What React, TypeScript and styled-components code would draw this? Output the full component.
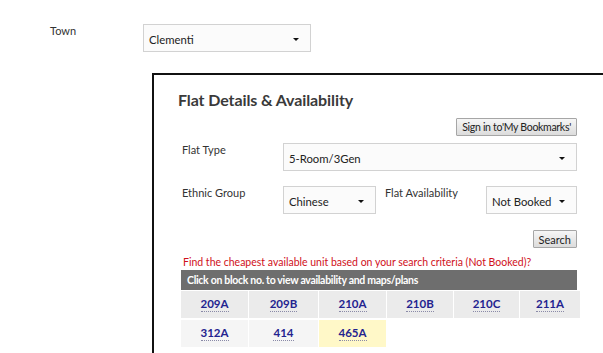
import React from "react";
import styled, { createGlobalStyle } from "styled-components";

const GlobalStyle = createGlobalStyle`
  html, body {
    margin: 0;
    padding: 0;
    background: #fff;
    overflow: hidden;
  }
  body {
    font-family: Lato, "Liberation Sans", sans-serif;
    color: #333;
  }
`;

const Page = styled.div`
  width: 603px;
  height: 353px;
  overflow: hidden;
`;

const TownRow = styled.div`
  display: flex;
  align-items: flex-start;
  padding: 24px 0 0 50px;
`;

const TownLabel = styled.div`
  width: 93px;
  font-size: 11px;
  line-height: 14px;
`;

const SelectBox = styled.div<{ $w: number }>`
  box-sizing: border-box;
  width: ${(p) => p.$w}px;
  height: 28px;
  border: 1px solid #d2d2d2;
  background: #fbfbfb;
  display: flex;
  align-items: center;
  justify-content: space-between;
  padding: 3px 11px 0 5px;
  font-size: 11.3px;
  color: #222;
`;

const Caret = styled.span`
  width: 0;
  height: 0;
  border-left: 3px solid transparent;
  border-right: 3px solid transparent;
  border-top: 3px solid #111;
`;

const Panel = styled.div`
  margin: 21px 0 0 152px;
  border-top: 2px solid #111;
  border-left: 2px solid #111;
  padding: 15px 0 0 27px;
  height: 300px;
`;

const Content = styled.div`
  width: 396px;
`;

const Title = styled.h2`
  margin: 0 0 0 -3px;
  font-size: 16px;
  line-height: 20px;
  font-weight: 700;
  color: #3a3a3a;
  letter-spacing: -0.1px;
`;

const RightRow = styled.div<{ $mt: number }>`
  display: flex;
  justify-content: flex-end;
  margin-top: ${(p) => p.$mt}px;
`;

const Button = styled.button<{ $tight?: boolean }>`
  box-sizing: border-box;
  height: 18px;
  padding: 0 5px;
  border: 1px solid #a6a6a6;
  border-radius: 1px;
  background: linear-gradient(#f6f6f6, #dcdcdc);
  font-family: Lato, "Liberation Sans", sans-serif;
  font-size: ${(p) => (p.$tight ? "10.5px" : "11px")};
  letter-spacing: ${(p) => (p.$tight ? "-0.3px" : "0")};
  color: #222;
`;

const FieldRow = styled.div<{ $mt: number }>`
  display: flex;
  align-items: flex-start;
  margin-top: ${(p) => p.$mt}px;
`;

const Label = styled.div<{ $w: number; $pl?: number }>`
  box-sizing: border-box;
  width: ${(p) => p.$w}px;
  padding-left: ${(p) => p.$pl ?? 1}px;
  font-size: 11px;
  line-height: 14px;
  color: #333;
`;

const Notice = styled.div`
  margin-top: 7px;
  font-size: 10.5px;
  line-height: 14px;
  color: #d0101a;
  padding-left: 2px;
`;

const TableHead = styled.div`
  margin-top: 1px;
  height: 20px;
  background: #6e6e6e;
  color: #fff;
  font-size: 10.5px;
  font-weight: 700;
  letter-spacing: -0.3px;
  line-height: 20px;
  padding-left: 6px;
`;

const Blocks = styled.div`
  display: grid;
  grid-template-columns: 67px 69px 67px 66px 65px 60px;
  grid-auto-rows: 27px;
  column-gap: 1px;
  row-gap: 2px;
  margin-top: 1px;
`;

const Cell = styled.div<{ $bg: string }>`
  background: ${(p) => p.$bg};
  display: flex;
  align-items: center;
  justify-content: center;
`;

const BlockLink = styled.a`
  font-size: 11.5px;
  font-weight: 700;
  color: #23238f;
  text-decoration: none;
  border-bottom: 1px dotted #8a8aa8;
  line-height: 13px;
  padding-bottom: 1px;
`;

const blocks = [
  { no: "209A", bg: "#ebebeb" },
  { no: "209B", bg: "#ebebeb" },
  { no: "210A", bg: "#ebebeb" },
  { no: "210B", bg: "#ebebeb" },
  { no: "210C", bg: "#ebebeb" },
  { no: "211A", bg: "#ebebeb" },
  { no: "312A", bg: "#f5f5f5" },
  { no: "414", bg: "#f5f5f5" },
  { no: "465A", bg: "#fff8c8" },
];

const Select = ({ value, w }: { value: string; w: number }) => (
  <SelectBox $w={w}>
    <span>{value}</span>
    <Caret />
  </SelectBox>
);

export default function App() {
  return (
    <Page>
      <GlobalStyle />
      <TownRow>
        <TownLabel>Town</TownLabel>
        <Select value="Clementi" w={168} />
      </TownRow>
      <Panel>
        <Content>
          <Title>Flat Details &amp; Availability</Title>
          <RightRow $mt={8}>
            <Button $tight>Sign in to'My Bookmarks'</Button>
          </RightRow>
          <FieldRow $mt={7}>
            <Label $w={102}>Flat Type</Label>
            <Select value="5-Room/3Gen" w={294} />
          </FieldRow>
          <FieldRow $mt={15}>
            <Label $w={102}>Ethnic Group</Label>
            <Select value="Chinese" w={93} />
            <Label $w={110} $pl={9}>Flat Availability</Label>
            <Select value="Not Booked" w={91} />
          </FieldRow>
          <RightRow $mt={16}>
            <Button>Search</Button>
          </RightRow>
          <Notice>
            Find the cheapest available unit based on your search criteria (Not Booked)?
          </Notice>
          <TableHead>Click on block no. to view availability and maps/plans</TableHead>
          <Blocks>
            {blocks.map((b) => (
              <Cell key={b.no} $bg={b.bg}>
                <BlockLink href="#">{b.no}</BlockLink>
              </Cell>
            ))}
          </Blocks>
        </Content>
      </Panel>
    </Page>
  );
}
